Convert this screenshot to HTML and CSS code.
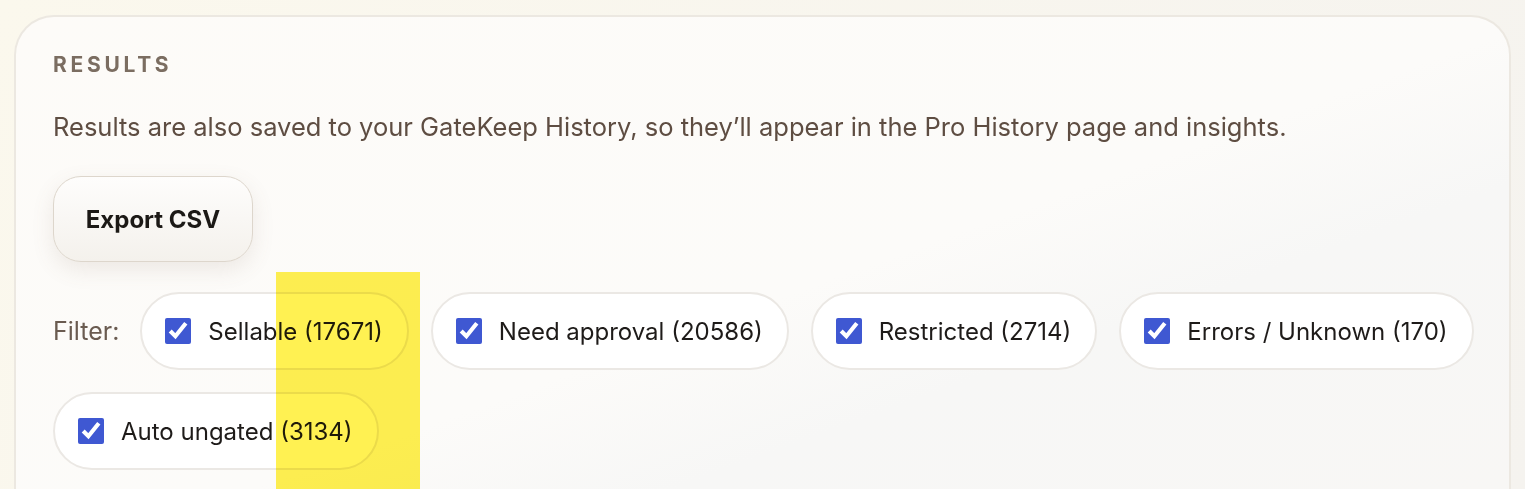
FILE: index.html
```html
<!DOCTYPE html>
<html lang="en">
<head>
  <meta charset="UTF-8">
  <meta name="viewport" content="width=device-width, initial-scale=1.0">
  <title>GateKeep Results</title>
  <link rel="stylesheet" href="styles.css">
</head>
<body>
  <div class="card">
    <h2 class="title">RESULTS</h2>
    <p class="note">Results are also saved to your GateKeep History, so they’ll appear in the Pro History page and insights.</p>

    <button class="export-button">Export CSV</button>

    <div class="filters">
      <span class="filter-label">Filter:</span>
      <label class="chip"><input type="checkbox" checked><span>Sellable (17671)</span></label>
      <label class="chip"><input type="checkbox" checked><span>Need approval (20586)</span></label>
      <label class="chip"><input type="checkbox" checked><span>Restricted (2714)</span></label>
      <label class="chip"><input type="checkbox" checked><span>Errors / Unknown (170)</span></label>
      <label class="chip"><input type="checkbox" checked><span>Auto ungated (3134)</span></label>
    </div>
  </div>

  <div class="highlight"></div>
</body>
</html>
```

FILE: styles.css
```css
body {
  margin: 0;
  height: 100vh;
  display: flex;
  flex-direction: column;
  background: linear-gradient(120deg, #fbf8ed, #f5f3ef);
  font-family: Inter, "Noto Sans", sans-serif;
  overflow: hidden;
}

.card {
  flex: 1;
  margin: 15px 14px 0 14px;
  padding: 36px 20px 0 37px;
  border: 2px solid #ece8e1;
  border-bottom: none;
  border-radius: 40px 40px 0 0;
  background: linear-gradient(160deg, #fdfbf8 0%, #fcfbf9 55%, #f7f7f6 70%, #f8f7f5 100%);
}

.title {
  margin: 0;
  font-size: 21px;
  line-height: 24px;
  font-weight: 700;
  letter-spacing: 3.7px;
  color: #7b6d61;
}

.note {
  margin: 35px 0 0 0;
  font-size: 25.5px;
  line-height: 30px;
  color: #5e4d42;
}

.export-button {
  display: block;
  margin-top: 34px;
  width: 200px;
  height: 86px;
  border: 1px solid #ddd6cc;
  border-radius: 28px;
  background: linear-gradient(180deg, #fefdfc, #f4f1ec);
  box-shadow: 0 8px 22px rgba(120, 100, 80, 0.12);
  font-family: inherit;
  font-size: 24px;
  font-weight: 700;
  color: #1c1916;
  cursor: pointer;
}

.filters {
  margin-top: 30px;
  display: flex;
  flex-wrap: wrap;
  align-items: center;
  gap: 22px 22px;
}

.filter-label {
  font-size: 25px;
  color: #6a5b50;
  margin-right: -1px;
}

.chip {
  display: flex;
  align-items: center;
  gap: 17px;
  height: 78px;
  box-sizing: border-box;
  padding: 0 24px 0 23px;
  border: 2px solid #ebe8e4;
  border-radius: 40px;
  background: #ffffff;
  font-size: 24px;
  color: #1e1b19;
  cursor: pointer;
}

.chip input {
  margin: 0;
  width: 26px;
  height: 26px;
  accent-color: #3f58d2;
}

.highlight {
  position: absolute;
  left: 276px;
  top: 272px;
  width: 144px;
  height: 217px;
  background: #fff152;
  mix-blend-mode: multiply;
  pointer-events: none;
}
```
